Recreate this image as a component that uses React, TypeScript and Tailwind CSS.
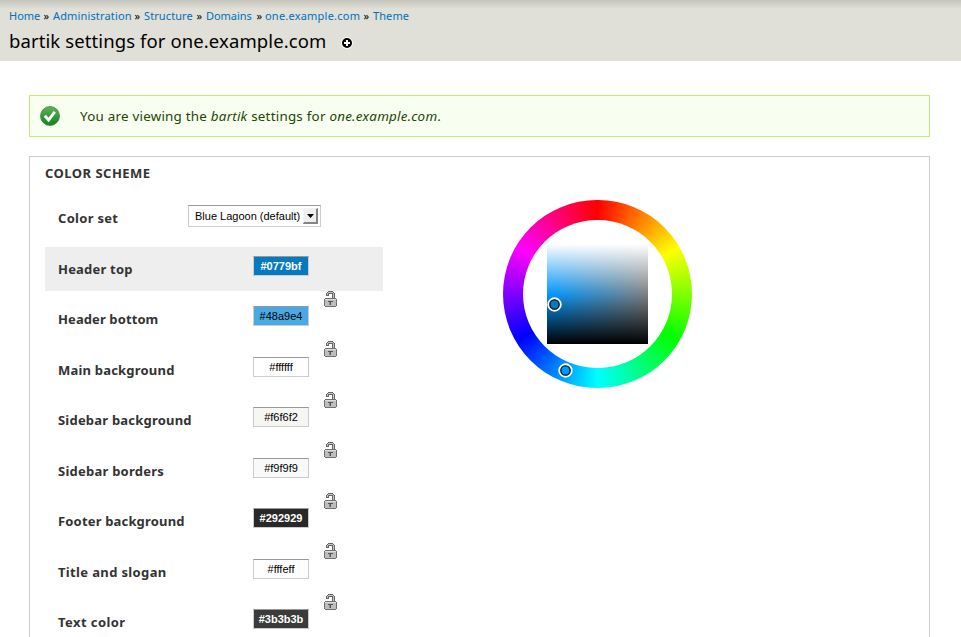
import React from "react";

const crumbs = [
  { label: "Home", width: "w-[44px]", gap: "mr-[4px]", track: "tracking-[0px]" },
  { label: "Administration", width: "w-[91px]", gap: "mr-[4px]", track: "tracking-[0.15px]" },
  { label: "Structure", width: "w-[62px]", gap: "mr-[4px]", track: "tracking-[0.1px]" },
  { label: "Domains", width: "w-[59px]", gap: "mr-[3px]", track: "tracking-[-0.05px]" },
  { label: "one.example.com", width: "w-[108px]", gap: "mr-[4px]", track: "tracking-[0.22px]" },
  { label: "Theme", width: "w-[44px]", gap: "mr-[4px]", track: "tracking-[0.1px]" },
];

const rows = [
  { label: "Header top", value: "#0779bf", swatch: "bg-[#0779bf] text-white font-bold", height: "h-[50px]", active: true, size: "tracking-[0.2px]" },
  { label: "Header bottom", value: "#48a9e4", swatch: "bg-[#48a9e4] text-black", height: "h-[51px]", size: "tracking-[0.1px]" },
  { label: "Main background", value: "#ffffff", swatch: "bg-white text-black", height: "h-[50px]", size: "tracking-[0.2px]" },
  { label: "Sidebar background", value: "#f6f6f2", swatch: "bg-[#f6f6f2] text-black", height: "h-[51px]", size: "tracking-[0.21px]" },
  { label: "Sidebar borders", value: "#f9f9f9", swatch: "bg-[#f9f9f9] text-black", height: "h-[50px]", size: "tracking-[0.24px]" },
  { label: "Footer background", value: "#292929", swatch: "bg-[#292929] text-white font-bold", height: "h-[51px]", size: "tracking-[0.17px]" },
  { label: "Title and slogan", value: "#fffeff", swatch: "bg-[#fffeff] text-black", height: "h-[50px]", size: "tracking-[0.36px]" },
  { label: "Text color", value: "#3b3b3b", swatch: "bg-[#3b3b3b] text-white font-bold", height: "h-[50px]", size: "tracking-[0.43px]" },
];

function Lock() {
  return (
    <svg width="13" height="16" viewBox="0 0 13 16" shapeRendering="crispEdges" className="ml-[279px] shrink-0">
      <path d="M4 0h5v1h1v1h1v5H8V3H5v2H2V2h1V1h1z" fill="#666" />
      <path d="M4 1h5v1h1v5H9V2H4v2H3V2h1z" fill="#c4c4c4" />
      <path d="M1 7h11v1h1v7h-1v1H1v-1H0V8h1z" fill="#707070" />
      <path d="M1 8h11v7H1z" fill="#bdbdbd" />
      <path d="M1 8h11v1H1z" fill="#dedede" />
      <path d="M4 10h5v1H4zM6 11h1v3H6z" fill="#555" />
      <path d="M5 11h1v3H5z" fill="#8a8a8a" />
    </svg>
  );
}

function Marker({ className, fill }: { className: string; fill: string }) {
  return (
    <svg width="15" height="15" viewBox="0 0 15 15" className={"absolute " + className}>
      <circle cx="7.5" cy="7.5" r="6.2" fill={fill} stroke="#fff" strokeWidth="2" />
      <circle cx="7.5" cy="7.5" r="4.6" fill={fill} stroke="#14222c" strokeWidth="1.4" />
    </svg>
  );
}

function ColorWheel() {
  return (
    <div className="relative mt-[43px] ml-[120px] h-[188px] w-[189px] shrink-0 rounded-full bg-[conic-gradient(#f00,#ff0,#0f0,#0ff,#00f,#f0f,#f00)] p-[20px]">
      <div className="h-[148px] w-[149px] rounded-full bg-white pt-[24px] pl-[24px]">
        <div className="h-[100px] w-[101px] bg-[linear-gradient(to_bottom,#fff,rgba(255,255,255,0)_50%,rgba(0,0,0,0)_50%,#000),linear-gradient(to_right,#0097ff,#808080)]" />
      </div>
      <Marker className="top-[97px] left-[44px]" fill="#0779bf" />
      <Marker className="top-[163px] left-[55px]" fill="#0097ff" />
    </div>
  );
}

export default function App() {
  return (
    <div className="h-[637px] w-[961px] overflow-hidden bg-white font-['Noto_Sans',sans-serif] text-[#333]">
      <header className="h-[61px] bg-[#e0dfd8] bg-[linear-gradient(to_bottom,#c4c3bc,#e0dfd8_9px)] pl-[9px]">
        <nav className="flex h-[32px] items-center text-[11px] leading-[16px] whitespace-nowrap text-[#0070b8]">
          {crumbs.map((c, i) => (
            <span key={c.label} className={"flex shrink-0 justify-between " + c.width}>
              <a className={c.track}>{c.label}</a>
              {i < crumbs.length - 1 && <span className={"text-black " + c.gap}>»</span>}
            </span>
          ))}
        </nav>
        <div className="flex h-[20px] items-center whitespace-nowrap text-black">
          <h1 className="-mt-[2px] w-[332px] text-[18.5px] leading-[20px] tracking-[0.1px]">bartik settings for one.example.com</h1>
          <svg width="12" height="12" viewBox="0 0 12 12" className="mt-[2px]">
            <circle cx="6" cy="6" r="5.9" fill="#fff" />
            <circle cx="6" cy="6" r="5" fill="#000" />
            <path d="M5 3h2v2h2v2H7v2H5V7H3V5h2z" fill="#fff" />
          </svg>
        </div>
      </header>
      <main className="px-[29px] pt-[34px]">
        <div className="flex h-[42px] w-[901px] items-center border border-[#be7] bg-[#f8fff0] pl-[10px] text-[13.4px] whitespace-nowrap text-[#234600]">
          <svg width="20" height="20" viewBox="0 0 20 20">
            <defs>
              <linearGradient id="ok" x1="0" y1="0" x2="0" y2="1">
                <stop offset="0" stopColor="#62b15b" />
                <stop offset="0.5" stopColor="#359a39" />
                <stop offset="1" stopColor="#168421" />
              </linearGradient>
            </defs>
            <circle cx="10" cy="10" r="9.5" fill="url(#ok)" stroke="#3b8c3c" strokeWidth="0.8" />
            <path d="M4.8 9.7l3.8 4.3 6.2-8.2" fill="none" stroke="#fff" strokeWidth="2.9" />
          </svg>
          <p className="ml-[20px] leading-[20px] tracking-[0.23px]">
            You are viewing the <em>bartik</em> settings for <em>one.example.com</em>.
          </p>
        </div>
        <section className="mt-[19px] flex h-[600px] w-[901px] border border-[#ccc] pl-[15px]">
          <div className="w-[338px] shrink-0">
            <h2 className="mt-[6px] text-[13px] leading-[20px] font-bold tracking-[0.48px] whitespace-nowrap">COLOR SCHEME</h2>
            <div className="mt-[22px] mb-[19px] flex h-[23px] items-start pl-[13px]">
              <span className="mt-[4px] w-[130px] text-[13px] leading-[18px] font-bold tracking-[0.3px]">Color set</span>
              <div className="flex h-[22px] w-[133px] items-center justify-between border border-[#ccc] border-t-[#999] bg-white pr-[2px] pl-[6px] font-['Liberation_Sans',Arial,sans-serif] text-[11px] whitespace-nowrap text-black">
                <span>Blue Lagoon (default)</span>
                <span className="flex h-[16px] w-[15px] items-center justify-center border-t border-r-2 border-b-2 border-l border-t-[#f4f4f4] border-r-[#858585] border-b-[#858585] border-l-[#f4f4f4] bg-[#eee]">
                  <svg width="7" height="4" viewBox="0 0 7 4"><path d="M0 0h7L3.5 4z" fill="#000" /></svg>
                </span>
              </div>
            </div>
            {rows.map((r) => (
              <div key={r.label} className={"flex flex-col " + r.height}>
                <div className={"flex h-[44px] shrink-0 items-start pl-[13px] " + (r.active ? "bg-[#eee]" : "")}>
                  <span className={"mt-[13px] w-[195px] text-[13px] leading-[18px] font-bold whitespace-nowrap " + r.size}>{r.label}</span>
                  <span className={"mt-[9px] flex h-[20px] w-[56px] items-center justify-center border border-[#ccc] border-t-[#999] font-['Liberation_Sans',Arial,sans-serif] text-[11px] " + r.swatch}>{r.value}</span>
                </div>
                <Lock />
              </div>
            ))}
          </div>
          <ColorWheel />
        </section>
      </main>
    </div>
  );
}
